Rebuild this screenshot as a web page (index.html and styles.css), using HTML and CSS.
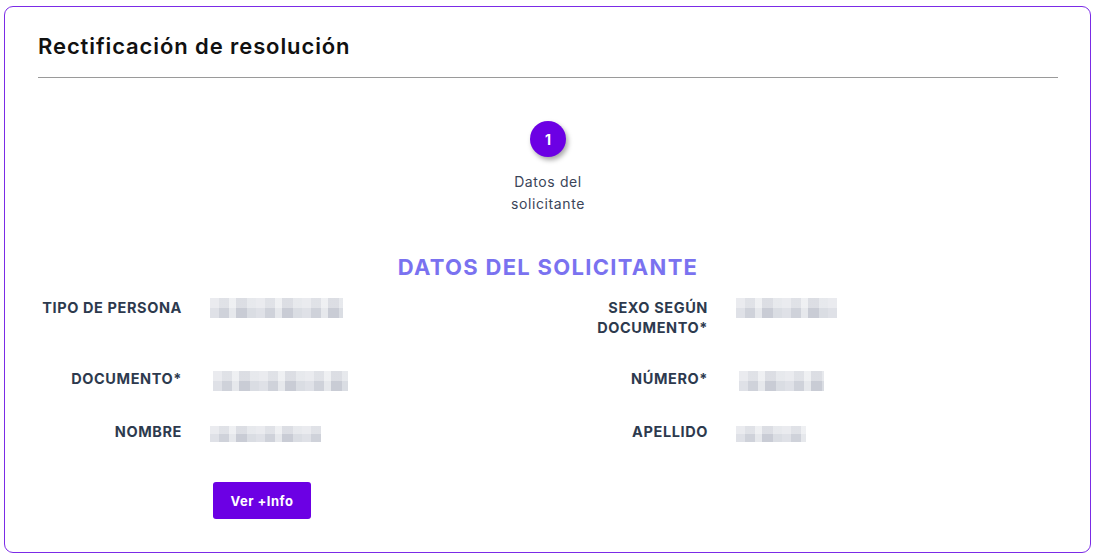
FILE: index.html
```html
<!DOCTYPE html>
<html lang="es">
<head>
    <meta charset="UTF-8">
    <meta name="viewport" content="width=device-width, initial-scale=1.0">
    <title>Rectificación de resolución</title>
    <link rel="stylesheet" href="styles.css">
</head>
<body>
    <div class="card">
        <h2 class="card-title">Rectificación de resolución</h2>
        <hr class="divider" />

        <div class="stepper">
            <div class="step">
                <div class="step-circle">1</div>
                <div class="step-label">Datos del<br>solicitante</div>
            </div>
        </div>

        <h3 class="section-title">DATOS DEL SOLICITANTE</h3>

        <div class="fields">
            <div class="field-label">TIPO DE PERSONA</div>
            <div class="field-value"><span class="blur w-133"></span></div>
            <div class="field-label">SEXO SEGÚN<br>DOCUMENTO*</div>
            <div class="field-value"><span class="blur w-101"></span></div>

            <div class="field-label">DOCUMENTO*</div>
            <div class="field-value"><span class="blur w-135 shift"></span></div>
            <div class="field-label">NÚMERO*</div>
            <div class="field-value"><span class="blur w-85 shift"></span></div>

            <div class="field-label">NOMBRE</div>
            <div class="field-value"><span class="blur w-111 thin"></span></div>
            <div class="field-label">APELLIDO</div>
            <div class="field-value"><span class="blur w-70 thin"></span></div>
        </div>

        <div class="actions">
            <button type="button" class="btn-info">Ver +Info</button>
        </div>
    </div>
</body>
</html>
```

FILE: styles.css
```css
body {
    margin: 0;
    padding: 0;
    background-color: #fff;
    font-family: Inter, "Liberation Sans", sans-serif;
    color: #2d3a4e;
}

.card {
    margin: 6px 4px 4px 4px;
    padding: 25px 32px 33px 33px;
    border: 1px solid #7b2be6;
    border-radius: 9px;
    background-color: #fff;
}

.card-title {
    margin: 0;
    font-size: 22px;
    line-height: 28px;
    font-weight: 600;
    letter-spacing: 0.9px;
    color: #111;
}

.divider {
    margin: 17px 0 0 0;
    border: none;
    border-top: 1px solid #9a9a9a;
}

.stepper {
    display: flex;
    justify-content: center;
    margin-top: 43px;
}

.step {
    display: flex;
    flex-direction: column;
    align-items: center;
}

.step-circle {
    width: 36px;
    height: 36px;
    border-radius: 50%;
    background-color: #6c00e4;
    color: #fff;
    font-size: 14px;
    font-weight: 700;
    display: flex;
    align-items: center;
    justify-content: center;
    box-shadow: 2px 3px 5px rgba(0, 0, 0, 0.35);
}

.step-label {
    margin-top: 14px;
    font-size: 14px;
    line-height: 22px;
    letter-spacing: 0.6px;
    text-align: center;
    color: #3b4559;
}

.section-title {
    margin: 38px 0 0 0;
    font-size: 22px;
    line-height: 28px;
    font-weight: 700;
    letter-spacing: 1.3px;
    text-align: center;
    color: #7a72f0;
}

.fields {
    display: grid;
    grid-template-columns: 144px 366px 160px 1fr;
    row-gap: 31px;
    margin-top: 17px;
}

.field-label {
    text-align: right;
    font-size: 14.5px;
    line-height: 20px;
    font-weight: 700;
    letter-spacing: 0.6px;
    color: #2d3a4e;
}

.field-value {
    padding-left: 28px;
}

.blur {
    display: block;
    height: 20px;
    background:
        linear-gradient(180deg, rgba(255, 255, 255, 0.35) 0 50%, rgba(255, 255, 255, 0) 50% 100%),
        repeating-linear-gradient(90deg, #dfe1e7 0 9px, #cfd2da 9px 19px, #e6e8ec 19px 26px, #c9ccd5 26px 37px, #dadde3 37px 46px);
}

.blur.shift {
    margin-top: 2px;
    margin-left: 3px;
}

.blur.thin {
    height: 16px;
    margin-top: 4px;
}

.w-133 { width: 133px; }
.w-101 { width: 101px; }
.w-135 { width: 135px; }
.w-85 { width: 85px; }
.w-111 { width: 111px; }
.w-70 { width: 70px; }

.actions {
    margin-top: 40px;
    padding-left: 175px;
}

.btn-info {
    width: 98px;
    height: 37px;
    border: none;
    border-radius: 3px;
    background-color: #6c00e4;
    color: #fff;
    font-family: Inter, "Liberation Sans", sans-serif;
    font-size: 13px;
    font-weight: 700;
    letter-spacing: 0.5px;
    cursor: pointer;
}
```
